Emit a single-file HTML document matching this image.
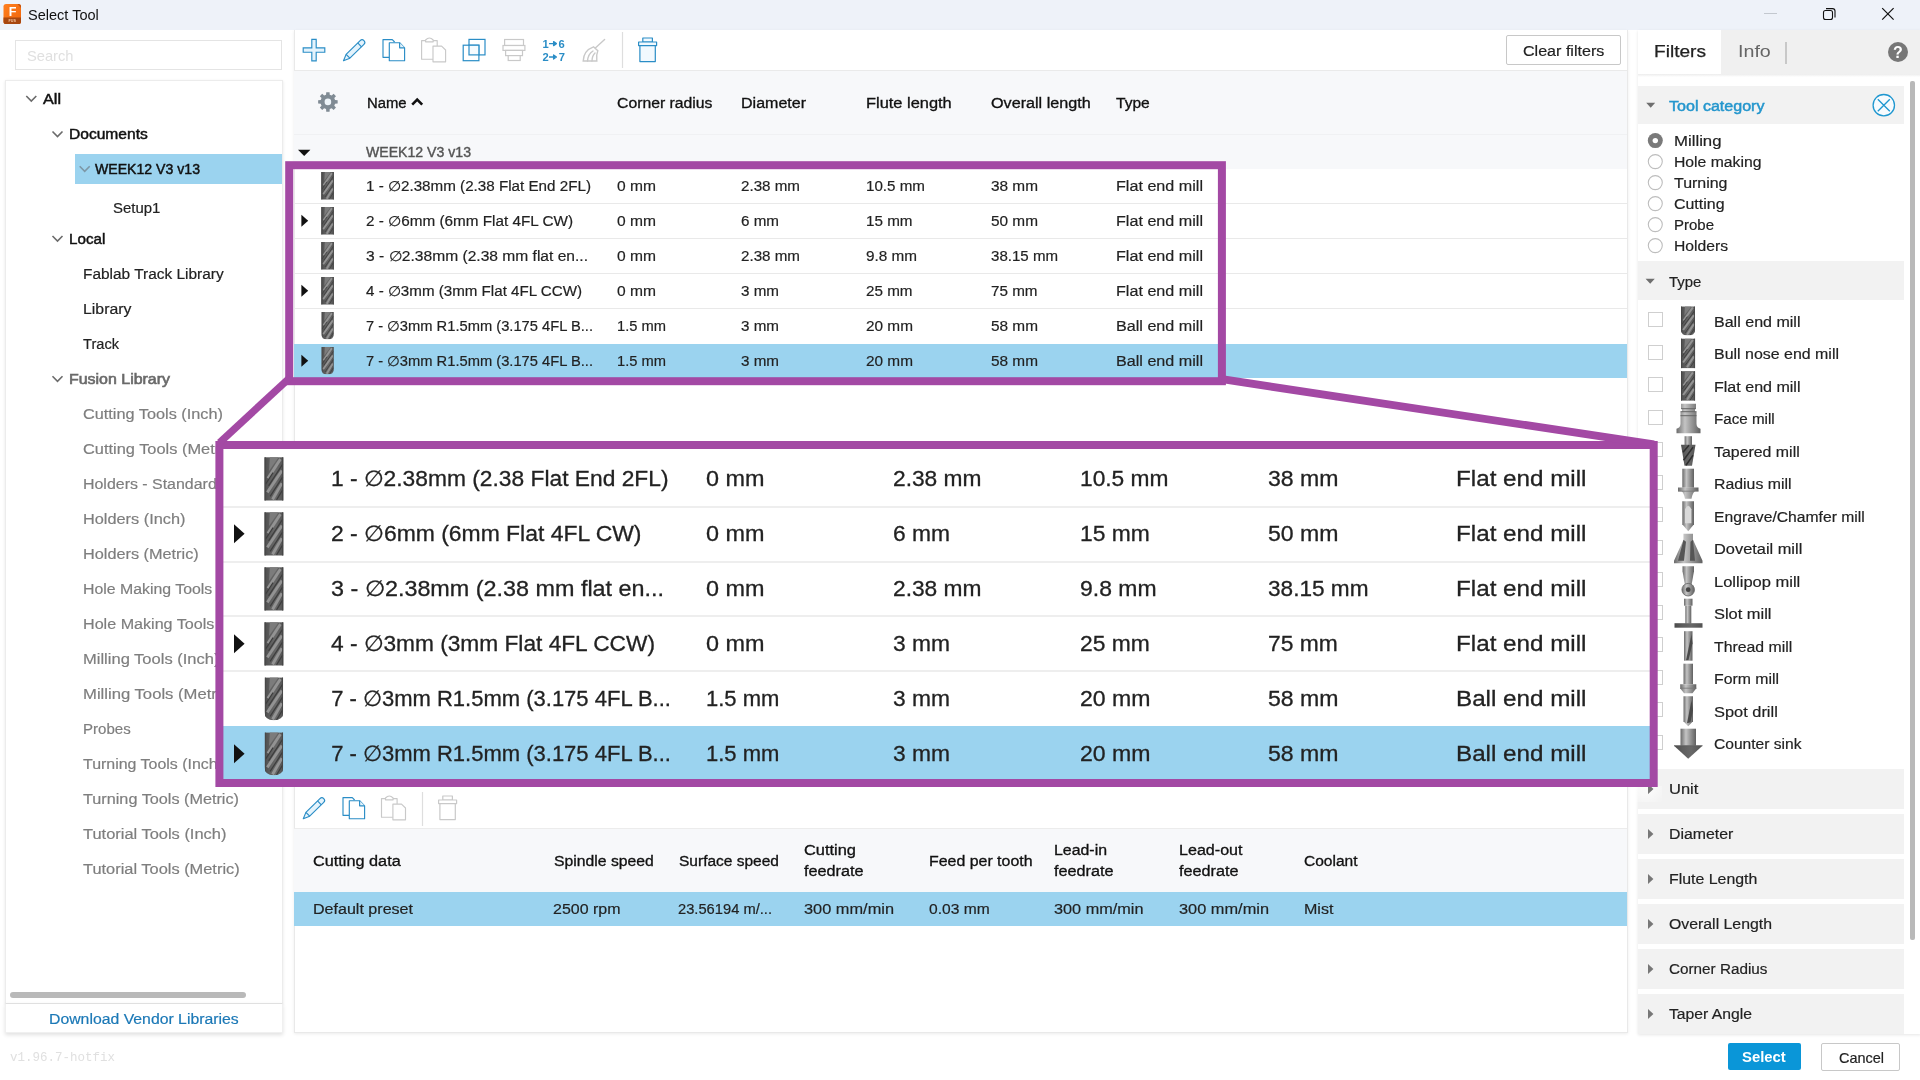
<!DOCTYPE html>
<html lang="en"><head><meta charset="utf-8"><title>Select Tool</title>
<style>
html,body{margin:0;padding:0;background:#fff;}
body{width:1920px;height:1080px;overflow:hidden;font-family:"Liberation Sans", sans-serif;}
#app{position:relative;width:1920px;height:1080px;overflow:hidden;background:#fff;will-change:transform;}
#app>div,#app>svg{position:absolute;box-sizing:border-box;}
.t{position:absolute;white-space:pre;transform-origin:0 50%;display:inline-block;}
</style></head><body>
<div id="app">
<div style="left:0px;top:0px;width:1920px;height:30px;background:#eef2f9;"></div>
<div style="left:15px;top:40px;width:267px;height:29.5px;background:#fff;border:1px solid #e4e4e4;"></div>
<div style="left:5px;top:79.5px;width:277.5px;height:924px;background:#fff;border:1px solid #ececec;box-shadow:0 1px 3px rgba(0,0,0,.10);"></div>
<div style="left:5px;top:1003px;width:277.5px;height:30px;background:#fff;border:1px solid #f0f0f0;border-top-color:#e0e0e0;box-shadow:0 2px 4px rgba(0,0,0,.12);"></div>
<div style="left:75px;top:154px;width:207px;height:30px;background:#9bd3ef;"></div>
<div style="left:10px;top:992.3px;width:235.7px;height:5.4px;background:#b9b9b9;border-radius:3px;"></div>
<div style="left:293.5px;top:30px;width:1334px;height:1003px;background:#fff;border:1px solid #e9e9e9;border-top:none;box-shadow:0 1px 3px rgba(0,0,0,.08);"></div>
<div style="left:294px;top:70px;width:1333px;height:64px;background:#f7f8fa;border-top:1px solid #eaeaea;"></div>
<div style="left:294px;top:134px;width:1333px;height:34.5px;background:#f7f8fa;border-top:1px solid #f0f1f3;"></div>
<div style="left:294px;top:203.0px;width:1333px;height:1px;background:#e9e9e9;"></div>
<div style="left:294px;top:238.0px;width:1333px;height:1px;background:#e9e9e9;"></div>
<div style="left:294px;top:273.0px;width:1333px;height:1px;background:#e9e9e9;"></div>
<div style="left:294px;top:308.0px;width:1333px;height:1px;background:#e9e9e9;"></div>
<div style="left:294px;top:343.7px;width:1333px;height:34.3px;background:#9bd3ef;"></div>
<div style="left:1506px;top:35px;width:115px;height:30px;background:#fff;border:1px solid #c8c8c8;border-radius:2px;"></div>
<div style="left:294px;top:828px;width:1333px;height:1px;background:#ececec;"></div>
<div style="left:294px;top:829px;width:1333px;height:63px;background:#f7f8fa;"></div>
<div style="left:294px;top:892px;width:1333px;height:34px;background:#9bd3ef;"></div>
<div style="left:1637.5px;top:30px;width:283px;height:1004px;background:#fff;box-shadow:0 1px 3px rgba(0,0,0,.10);"></div>
<div style="left:1721px;top:30px;width:199px;height:44px;background:#f0f0f0;"></div>
<div style="left:1637.5px;top:74px;width:283px;height:3px;background:linear-gradient(#ececec,#fff);"></div>
<div style="left:1785.2px;top:41.5px;width:1.6px;height:22.5px;background:#c8c8c8;"></div>
<div style="left:1637.5px;top:85.7px;width:266.3px;height:38.8px;background:#f2f2f2;"></div>
<div style="left:1637.5px;top:261.2px;width:266.3px;height:38.8px;background:#f2f2f2;"></div>
<div style="left:1637.5px;top:769px;width:266.3px;height:40px;background:#f2f2f2;"></div>
<div style="left:1637.5px;top:814px;width:266.3px;height:40px;background:#f2f2f2;"></div>
<div style="left:1637.5px;top:859px;width:266.3px;height:40px;background:#f2f2f2;"></div>
<div style="left:1637.5px;top:904px;width:266.3px;height:40px;background:#f2f2f2;"></div>
<div style="left:1637.5px;top:949px;width:266.3px;height:40px;background:#f2f2f2;"></div>
<div style="left:1637.5px;top:994px;width:266.3px;height:40px;background:#f2f2f2;"></div>
<div style="left:1909.7px;top:80.7px;width:5px;height:859px;background:#b9b9b9;border-radius:2px;"></div>
<div style="left:1648px;top:312.0px;width:15px;height:15px;background:#fff;border:1px solid #cfcfcf;"></div>
<div style="left:1648px;top:344.5px;width:15px;height:15px;background:#fff;border:1px solid #cfcfcf;"></div>
<div style="left:1648px;top:377.0px;width:15px;height:15px;background:#fff;border:1px solid #cfcfcf;"></div>
<div style="left:1648px;top:409.5px;width:15px;height:15px;background:#fff;border:1px solid #cfcfcf;"></div>
<div style="left:1648px;top:442.0px;width:15px;height:15px;background:#fff;border:1px solid #cfcfcf;"></div>
<div style="left:1648px;top:474.5px;width:15px;height:15px;background:#fff;border:1px solid #cfcfcf;"></div>
<div style="left:1648px;top:507.0px;width:15px;height:15px;background:#fff;border:1px solid #cfcfcf;"></div>
<div style="left:1648px;top:539.5px;width:15px;height:15px;background:#fff;border:1px solid #cfcfcf;"></div>
<div style="left:1648px;top:572.0px;width:15px;height:15px;background:#fff;border:1px solid #cfcfcf;"></div>
<div style="left:1648px;top:604.5px;width:15px;height:15px;background:#fff;border:1px solid #cfcfcf;"></div>
<div style="left:1648px;top:637.0px;width:15px;height:15px;background:#fff;border:1px solid #cfcfcf;"></div>
<div style="left:1648px;top:669.5px;width:15px;height:15px;background:#fff;border:1px solid #cfcfcf;"></div>
<div style="left:1648px;top:702.0px;width:15px;height:15px;background:#fff;border:1px solid #cfcfcf;"></div>
<div style="left:1648px;top:734.5px;width:15px;height:15px;background:#fff;border:1px solid #cfcfcf;"></div>
<div style="left:1728px;top:1043px;width:73px;height:26.7px;background:#0a96d8;border-radius:2px;"></div>
<div style="left:1821px;top:1043px;width:79px;height:28px;background:#fff;border:1px solid #c8c8c8;border-radius:2px;"></div>
<svg width="1920" height="1080" viewBox="0 0 1920 1080" style="left:0;top:0;pointer-events:none"><defs>
<linearGradient id="cyl" x1="0" x2="1" y1="0" y2="0"><stop offset="0" stop-color="#4c4c4c"/><stop offset=".3" stop-color="#5e5e5e"/><stop offset=".6" stop-color="#686868"/><stop offset="1" stop-color="#535353"/></linearGradient>
<linearGradient id="cyl2" x1="0" x2="1" y1="0" y2="0"><stop offset="0" stop-color="#6a6a6a"/><stop offset=".35" stop-color="#c4c4c4"/><stop offset=".6" stop-color="#9c9c9c"/><stop offset="1" stop-color="#606060"/></linearGradient>
<g id="flutes"><path d="M4 0 H10.5 L3.4 9.5 Z" fill="#7c7c7c"/><g stroke="#939393" stroke-width="2.1" fill="none"><path d="M11.9 1.2 L2.5 14.6 M13 9.2 L2.1 24.3 M13 18 L6 29.2"/></g><g stroke="#3d3d3d" stroke-width=".9" fill="none"><path d="M13.6 4.8 L3 19.8 M13.6 13.6 L4.2 27.2 M6.4 10.6 L0.8 18.6 M13.6 22.6 L9 29.6"/></g><path d="M0.5 0 V30 M13.6 0 V30" stroke="#474747" stroke-width=".9"/></g>
<clipPath id="ballclip"><path d="M0 0 H14 V24 Q14 30 7 30 Q0 30 0 24 Z"/></clipPath>
<g id="flat"><rect x="0" y="0" width="14" height="30" fill="url(#cyl)"/><use href="#flutes"/></g>
<g id="ball" clip-path="url(#ballclip)"><rect x="0" y="0" width="14" height="30" fill="url(#cyl)"/><use href="#flutes"/></g>
</defs><defs><linearGradient id="fz" x1="0" y1="0" x2="1" y2="1"><stop offset="0" stop-color="#ff7f1f"/><stop offset="1" stop-color="#ee640a"/></linearGradient></defs><rect x="3.5" y="4" width="17.5" height="20" rx="2.6" fill="url(#fz)"/><path d="M3.5 17.6 H21 V21.4 Q21 24 18.4 24 H6.1 Q3.5 24 3.5 21.4 Z" fill="#a8470f"/><path d="M17.5 4 H18.4 Q21 4 21 6.6 V8 Z" fill="#c4530f"/><text x="8.7" y="16" font-family="Liberation Sans, sans-serif" font-weight="700" font-size="12.6" fill="#fff">F</text><text x="8.6" y="22.4" font-family="Liberation Sans, sans-serif" font-weight="700" font-size="3.6" fill="#f6c9a6" textLength="7.4" lengthAdjust="spacingAndGlyphs">FUS</text><path d="M1764 13.5 H1777" stroke="#c3c8cf" stroke-width="1"/><rect x="1823.5" y="10.5" width="9" height="9" rx="2" fill="none" stroke="#111" stroke-width="1.1"/><path d="M1826 8.6 H1832.5 Q1835 8.6 1835 11 V17.5" fill="none" stroke="#111" stroke-width="1.1"/><path d="M1882.2 8.2 L1893.6 19.6 M1893.6 8.2 L1882.2 19.6" stroke="#111" stroke-width="1.2"/><path d="M26.3 96 l5 5 l5 -5" fill="none" stroke="#6b6b6b" stroke-width="1.6"/><path d="M52.5 131.5 l5 5 l5 -5" fill="none" stroke="#6b6b6b" stroke-width="1.6"/><path d="M79.7 166.3 l5 5 l5 -5" fill="none" stroke="#7d97a6" stroke-width="1.6"/><path d="M52.5 236 l5 5 l5 -5" fill="none" stroke="#6b6b6b" stroke-width="1.6"/><path d="M52.5 376.3 l5 5 l5 -5" fill="none" stroke="#6b6b6b" stroke-width="1.6"/><path d="M311.8 39.3 h4.4 v8.5 h8.6 v4.4 h-8.6 v8.6 h-4.4 v-8.6 h-8.6 v-4.4 h8.6 z" fill="#e4f3fc" stroke="#2a8dc6" stroke-width="1.15"/><g transform="translate(343.5,60.7) rotate(-44.5)" fill="#e4f3fc" stroke="#2a8dc6" stroke-width="1.15" stroke-linejoin="round"><path d="M0 0 L6.3 -2.7 H26 A2.7 2.7 0 0 1 26 2.7 H6.3 Z"/><path d="M6.3 -2.7 V2.7 M22.6 -2.7 V2.7" fill="none"/></g><g transform="translate(0,0)" fill="#fff" stroke="#2a8dc6" stroke-width="1.15" stroke-linejoin="round"><path d="M389.3 57.3 H383 V39.6 H392.3 L394.6 42" fill="none"/><path d="M389.3 42.7 H399.6 L404.6 47.8 V60.7 H389.3 Z"/><path d="M399.6 42.7 V47.8 H404.6" fill="#e4f3fc"/></g><g transform="translate(0,0)" fill="#fff" stroke="#c9c9c9" stroke-width="1.15" stroke-linejoin="round"><path d="M433 59.2 H421.6 V40.6 H437.2 V46" fill="none"/><path d="M425.6 41.8 V40 Q429.4 36 433.2 40 V41.8 Z"/><path d="M433 46.1 H441.6 L445.6 50 V61.8 H433 Z"/></g><g fill="#fff" stroke="#2a8dc6" stroke-width="1.2"><rect x="469" y="39.4" width="16" height="15.5"/><rect x="463.2" y="45.2" width="15.7" height="15.5"/><rect x="469" y="45.2" width="9.9" height="9.7" fill="#f6fbfe"/></g><g fill="#fff" stroke="#c9c9c9" stroke-width="1.2"><rect x="504.6" y="39.5" width="18.9" height="6"/><rect x="503" y="45.5" width="21.9" height="4.9"/><rect x="505.6" y="50.4" width="16.9" height="5.2"/><rect x="508.2" y="55.6" width="12" height="4.9"/></g><g font-family="Liberation Sans, sans-serif" font-weight="700" font-size="11.2" fill="#2a8dc6"><text x="542.4" y="47.6">1</text><text x="558.6" y="47.6">6</text><text x="542.4" y="61">2</text><text x="558.8" y="61">7</text><path d="M549 43.6 H555 M553.6 41.6 L556.4 43.6 L553.6 45.6 Z M549 57 H555 M553.6 55 L556.4 57 L553.6 59 Z" stroke="#2a8dc6" stroke-width="1.3" stroke-linejoin="round"/></g><g fill="none" stroke="#c9c9c9" stroke-width="1.4" stroke-linecap="round"><path d="M604.6 39.4 L595.6 47.8"/><path d="M583.2 61 Q583.5 50.5 593.5 46.8 L597.8 50.8 Q596 55 596.8 61 Z" fill="#fff"/><path d="M587.5 61 Q588 54 593 51 M592 61 Q592 56 595 53"/></g><path d="M622.5 32 V68 M422.5 792 V826" stroke="#dedede" stroke-width="1.2"/><g transform="translate(0,0)" fill="#f2f9fe" stroke="#2a8dc6" stroke-width="1.2" stroke-linejoin="round"><rect x="642.8" y="38" width="9.6" height="4"/><rect x="638.6" y="42" width="18" height="3.6"/><rect x="639.9" y="45.6" width="15.4" height="16"/></g><g transform="translate(303.3,818.7) rotate(-44.5)" fill="#e4f3fc" stroke="#2a8dc6" stroke-width="1.15" stroke-linejoin="round"><path d="M0 0 L6.3 -2.7 H26 A2.7 2.7 0 0 1 26 2.7 H6.3 Z"/><path d="M6.3 -2.7 V2.7 M22.6 -2.7 V2.7" fill="none"/></g><g transform="translate(-40,758)" fill="#fff" stroke="#2a8dc6" stroke-width="1.15" stroke-linejoin="round"><path d="M389.3 57.3 H383 V39.6 H392.3 L394.6 42" fill="none"/><path d="M389.3 42.7 H399.6 L404.6 47.8 V60.7 H389.3 Z"/><path d="M399.6 42.7 V47.8 H404.6" fill="#e4f3fc"/></g><g transform="translate(-40.1,758)" fill="#fff" stroke="#c9c9c9" stroke-width="1.15" stroke-linejoin="round"><path d="M433 59.2 H421.6 V40.6 H437.2 V46" fill="none"/><path d="M425.6 41.8 V40 Q429.4 36 433.2 40 V41.8 Z"/><path d="M433 46.1 H441.6 L445.6 50 V61.8 H433 Z"/></g><g transform="translate(-200,758)" fill="#fff" stroke="#c9c9c9" stroke-width="1.2" stroke-linejoin="round"><rect x="642.8" y="38" width="9.6" height="4"/><rect x="638.6" y="42" width="18" height="3.6"/><rect x="639.9" y="45.6" width="15.4" height="16"/></g><path d="M326.23 92.14 L329.57 92.14 L329.73 94.73 L331.68 95.54 L333.62 93.82 L335.98 96.18 L334.26 98.12 L335.07 100.07 L337.66 100.23 L337.66 103.57 L335.07 103.73 L334.26 105.68 L335.98 107.62 L333.62 109.98 L331.68 108.26 L329.73 109.07 L329.57 111.66 L326.23 111.66 L326.07 109.07 L324.12 108.26 L322.18 109.98 L319.82 107.62 L321.54 105.68 L320.73 103.73 L318.14 103.57 L318.14 100.23 L320.73 100.07 L321.54 98.12 L319.82 96.18 L322.18 93.82 L324.12 95.54 L326.07 94.73 Z" fill="#808b94"/><circle cx="327.9" cy="101.9" r="3.3" fill="#eef4f9"/><path d="M412.2 104.6 L417.2 99.6 L422.2 104.6" fill="none" stroke="#111" stroke-width="2.6"/><path d="M298 149.7 H310.4 L304.2 155.9 Z" fill="#111"/><path d="M301.4 214.75 L308.2 220.75 L301.4 226.75 Z" fill="#111"/><path d="M301.4 284.75 L308.2 290.75 L301.4 296.75 Z" fill="#111"/><path d="M301.4 354.75 L308.2 360.75 L301.4 366.75 Z" fill="#111"/><use href="#flat" transform="translate(321.3,172) scale(0.893,0.917)"/><use href="#flat" transform="translate(321.3,207) scale(0.893,0.917)"/><use href="#flat" transform="translate(321.3,242) scale(0.893,0.917)"/><use href="#flat" transform="translate(321.3,277) scale(0.893,0.917)"/><use href="#ball" transform="translate(321.3,312) scale(0.893,0.917)"/><use href="#ball" transform="translate(321.3,347) scale(0.893,0.917)"/><circle cx="1898" cy="52" r="10" fill="#777"/><text x="1898" y="58" text-anchor="middle" font-family="Liberation Sans, sans-serif" font-weight="700" font-size="16" fill="#fff">?</text><circle cx="1883.8" cy="105.2" r="10.7" fill="#f7fbfe" stroke="#1f97d0" stroke-width="1.3"/><path d="M1877.8 99.2 L1889.8 111.2 M1889.8 99.2 L1877.8 111.2" stroke="#1f97d0" stroke-width="1.3"/><path d="M1646.2 102.8 H1655.2 L1650.7 107.8 Z M1645.6 278.8 H1654.8 L1650.2 283.8 Z" fill="#6f6f6f"/><path d="M1648 784 L1653.4 789 L1648 794 Z" fill="#777"/><path d="M1648 829 L1653.4 834 L1648 839 Z" fill="#777"/><path d="M1648 874 L1653.4 879 L1648 884 Z" fill="#777"/><path d="M1648 919 L1653.4 924 L1648 929 Z" fill="#777"/><path d="M1648 964 L1653.4 969 L1648 974 Z" fill="#777"/><path d="M1648 1009 L1653.4 1014 L1648 1019 Z" fill="#777"/><circle cx="1655.3" cy="140.6" r="7.5" fill="#7a7a7a"/><circle cx="1655.3" cy="140.6" r="2.7" fill="#fff"/><circle cx="1655.3" cy="161.6" r="7" fill="#fff" stroke="#bdbdbd" stroke-width="1.1"/><circle cx="1655.3" cy="182.6" r="7" fill="#fff" stroke="#bdbdbd" stroke-width="1.1"/><circle cx="1655.3" cy="203.6" r="7" fill="#fff" stroke="#bdbdbd" stroke-width="1.1"/><circle cx="1655.3" cy="224.6" r="7" fill="#fff" stroke="#bdbdbd" stroke-width="1.1"/><circle cx="1655.3" cy="245.6" r="7" fill="#fff" stroke="#bdbdbd" stroke-width="1.1"/><use href="#ball" transform="translate(1681,306.2) scale(1,0.98)"/><use href="#flat" transform="translate(1681,338.7) scale(1,0.98)"/><use href="#flat" transform="translate(1681,371.2) scale(1,0.98)"/><g transform="translate(1681,403.7)"><path d="M0 0 H15 V5 H14 V8 H15.5 V20 Q15.5 24 19.5 25 V29.5 H-4.5 V25 Q-0.5 24 -0.5 20 V8 H1 V5 H0 Z" fill="url(#cyl2)"/><path d="M0 5 H15 M-0.5 8 H15.5 M-0.5 12 H15.5" stroke="#666" stroke-width="1"/></g><g transform="translate(1681,436.2)"><rect x="3.6" y="0" width="7.4" height="9" fill="url(#cyl2)"/><path d="M0 8.5 H14.5 L11 29.5 H3.5 Z" fill="url(#cyl)"/><path d="M2 16 L8 9 M2.5 24 L12 11 M5 29 L12 19" stroke="#2f2f2f" stroke-width="1.5"/></g><g transform="translate(1681,468.7)"><rect x="1.3" y="0" width="11.7" height="19" fill="url(#cyl2)"/><path d="M-3 18.8 H17.5 V22.5 H14 Q11.5 24 10.5 30 H4 Q3 24 0.5 22.5 H-3 Z" fill="url(#cyl2)"/><path d="M-3 22.5 H17.5" stroke="#777" stroke-width=".8"/></g><g transform="translate(1681,501.2)"><path d="M1.3 0 H13 V23 L7.2 30 L1.3 23 Z" fill="url(#cyl2)"/><path d="M4 8 Q7.2 1 10.4 8 V22 H4 Z" fill="#d9d9d9"/></g><g transform="translate(1681,533.7)"><path d="M2.5 0 H12 V6 L21.5 27 V29.5 H-7 V27 L2.5 6 Z" fill="url(#cyl2)"/><path d="M2.5 6 L-3 27 H3 L5 8 Z M12 6 L14 27 H9 L9.5 8 Z" fill="#555"/></g><g transform="translate(1681,566.2)"><path d="M1.5 0 H13 V5 L10.5 19 H4 L1.5 5 Z" fill="url(#cyl2)"/><circle cx="7.2" cy="23.5" r="6.3" fill="url(#cyl2)" stroke="#666" stroke-width=".8"/><circle cx="7.2" cy="23.5" r="2.4" fill="#444"/></g><g transform="translate(1681,598.7)"><rect x="3" y="0" width="8.5" height="7" fill="url(#cyl2)"/><rect x="4.3" y="7" width="6" height="18" fill="url(#cyl2)"/><rect x="-6.5" y="24.5" width="28" height="4.5" fill="url(#cyl)"/></g><g transform="translate(1681,631.2)"><rect x="3" y="0" width="8.5" height="29.5" fill="url(#cyl2)"/><path d="M5 29 L10.5 3 L11.5 12 L7.5 29 Z" fill="#4a4a4a"/></g><g transform="translate(1681,663.7)"><rect x="2.5" y="0" width="9.5" height="20.5" fill="url(#cyl2)"/><path d="M-0.8 20.5 H15.3 V24.5 L11.5 29.5 H3 L-0.8 24.5 Z" fill="url(#cyl2)"/><path d="M-0.8 24.5 H15.3" stroke="#777" stroke-width=".8"/></g><g transform="translate(1681,696.2)"><path d="M2.5 0 H12 V25 L7.2 30 L2.5 25 Z" fill="url(#cyl2)"/><path d="M6 27 L10.5 4 L12 14 L9.5 26 Z" fill="#4a4a4a"/></g><g transform="translate(1681,728.7)"><rect x="-0.5" y="0" width="15.5" height="17" fill="url(#cyl2)"/><path d="M-7 17 H21.5 L7.2 30 Z" fill="url(#cyl)"/><path d="M-7 17 H21.5" stroke="#555" stroke-width=".8"/></g></svg>
<span class="t" style="left:28.1px;top:4.80px;font-size:15px;line-height:20px;color:#111;transform:scaleX(0.9684);">Select Tool</span>
<span class="t" style="left:27px;top:45.60px;font-size:15px;line-height:20px;color:#e0e0e0;transform:scaleX(0.9783);">Search</span>
<span class="t" style="left:49px;top:1009.45px;font-size:14px;line-height:20px;color:#1b78b6;-webkit-text-stroke:0.18px #1b78b6;transform:scaleX(1.1284);">Download Vendor Libraries</span>
<span class="t" style="left:10.3px;top:1047.50px;font-size:13px;line-height:20px;color:#e0e0e0;font-family:'Liberation Mono', monospace;transform:scaleX(0.9614);">v1.96.7-hotfix</span>
<span class="t" style="left:43px;top:88.65px;font-size:14px;line-height:20px;color:#111;-webkit-text-stroke:0.45px #111;transform:scaleX(1.1566);">All</span>
<span class="t" style="left:69.2px;top:124.15px;font-size:14px;line-height:20px;color:#111;-webkit-text-stroke:0.45px #111;transform:scaleX(1.1128);">Documents</span>
<span class="t" style="left:95.3px;top:159.15px;font-size:14px;line-height:20px;color:#111;-webkit-text-stroke:0.45px #111;transform:scaleX(1.0069);">WEEK12 V3 v13</span>
<span class="t" style="left:113px;top:197.85px;font-size:14px;line-height:20px;color:#222;-webkit-text-stroke:0.18px #222;transform:scaleX(1.0659);">Setup1</span>
<span class="t" style="left:69px;top:228.65px;font-size:14px;line-height:20px;color:#111;-webkit-text-stroke:0.45px #111;transform:scaleX(1.0846);">Local</span>
<span class="t" style="left:83.3px;top:263.65px;font-size:14px;line-height:20px;color:#222;-webkit-text-stroke:0.18px #222;transform:scaleX(1.1026);">Fablab Track Library</span>
<span class="t" style="left:83.3px;top:298.65px;font-size:14px;line-height:20px;color:#222;-webkit-text-stroke:0.18px #222;transform:scaleX(1.1309);">Library</span>
<span class="t" style="left:83.3px;top:333.65px;font-size:14px;line-height:20px;color:#222;-webkit-text-stroke:0.18px #222;transform:scaleX(1.0440);">Track</span>
<span class="t" style="left:69px;top:368.95px;font-size:14px;line-height:20px;color:#6a6a6a;-webkit-text-stroke:0.6px #6a6a6a;transform:scaleX(1.1386);">Fusion Library</span>
<span class="t" style="left:83.3px;top:404.45px;font-size:14px;line-height:20px;color:#7e7e7e;-webkit-text-stroke:0.18px #7e7e7e;transform:scaleX(1.1632);">Cutting Tools (Inch)</span>
<span class="t" style="left:83.3px;top:439.45px;font-size:14px;line-height:20px;color:#7e7e7e;-webkit-text-stroke:0.18px #7e7e7e;transform:scaleX(1.1703);">Cutting Tools (Metric)</span>
<span class="t" style="left:83.3px;top:474.45px;font-size:14px;line-height:20px;color:#7e7e7e;-webkit-text-stroke:0.18px #7e7e7e;transform:scaleX(1.1382);">Holders - Standard Taper Blanks</span>
<span class="t" style="left:83.3px;top:509.45px;font-size:14px;line-height:20px;color:#7e7e7e;-webkit-text-stroke:0.18px #7e7e7e;transform:scaleX(1.1647);">Holders (Inch)</span>
<span class="t" style="left:83.3px;top:544.45px;font-size:14px;line-height:20px;color:#7e7e7e;-webkit-text-stroke:0.18px #7e7e7e;transform:scaleX(1.1619);">Holders (Metric)</span>
<span class="t" style="left:83.3px;top:579.45px;font-size:14px;line-height:20px;color:#7e7e7e;-webkit-text-stroke:0.18px #7e7e7e;transform:scaleX(1.1325);">Hole Making Tools (Inch)</span>
<span class="t" style="left:83.3px;top:614.45px;font-size:14px;line-height:20px;color:#7e7e7e;-webkit-text-stroke:0.18px #7e7e7e;transform:scaleX(1.1513);">Hole Making Tools (Metric)</span>
<span class="t" style="left:83.3px;top:649.45px;font-size:14px;line-height:20px;color:#7e7e7e;-webkit-text-stroke:0.18px #7e7e7e;transform:scaleX(1.1801);">Milling Tools (Inch)</span>
<span class="t" style="left:83.3px;top:684.45px;font-size:14px;line-height:20px;color:#7e7e7e;-webkit-text-stroke:0.18px #7e7e7e;transform:scaleX(1.1898);">Milling Tools (Metric)</span>
<span class="t" style="left:83.3px;top:719.45px;font-size:14px;line-height:20px;color:#7e7e7e;-webkit-text-stroke:0.18px #7e7e7e;transform:scaleX(1.0753);">Probes</span>
<span class="t" style="left:83.3px;top:754.45px;font-size:14px;line-height:20px;color:#7e7e7e;-webkit-text-stroke:0.18px #7e7e7e;transform:scaleX(1.1386);">Turning Tools (Inch)</span>
<span class="t" style="left:83.3px;top:789.45px;font-size:14px;line-height:20px;color:#7e7e7e;-webkit-text-stroke:0.18px #7e7e7e;transform:scaleX(1.1590);">Turning Tools (Metric)</span>
<span class="t" style="left:83.3px;top:824.45px;font-size:14px;line-height:20px;color:#7e7e7e;-webkit-text-stroke:0.18px #7e7e7e;transform:scaleX(1.1738);">Tutorial Tools (Inch)</span>
<span class="t" style="left:83.3px;top:859.45px;font-size:14px;line-height:20px;color:#7e7e7e;-webkit-text-stroke:0.18px #7e7e7e;transform:scaleX(1.1710);">Tutorial Tools (Metric)</span>
<span class="t" style="left:1523px;top:41.35px;font-size:14px;line-height:20px;color:#222;-webkit-text-stroke:0.18px #222;transform:scaleX(1.1484);">Clear filters</span>
<span class="t" style="left:366.8px;top:93.15px;font-size:14px;line-height:20px;color:#111;-webkit-text-stroke:0.33px #111;transform:scaleX(1.0600);">Name</span>
<span class="t" style="left:616.5px;top:93.15px;font-size:14px;line-height:20px;color:#111;-webkit-text-stroke:0.3px #111;transform:scaleX(1.1258);">Corner radius</span>
<span class="t" style="left:741.3px;top:93.15px;font-size:14px;line-height:20px;color:#111;-webkit-text-stroke:0.3px #111;transform:scaleX(1.1444);">Diameter</span>
<span class="t" style="left:866.3px;top:93.15px;font-size:14px;line-height:20px;color:#111;-webkit-text-stroke:0.3px #111;transform:scaleX(1.1712);">Flute length</span>
<span class="t" style="left:991.3px;top:93.15px;font-size:14px;line-height:20px;color:#111;-webkit-text-stroke:0.3px #111;transform:scaleX(1.1541);">Overall length</span>
<span class="t" style="left:1116.3px;top:93.15px;font-size:14px;line-height:20px;color:#111;-webkit-text-stroke:0.3px #111;transform:scaleX(1.1100);">Type</span>
<span class="t" style="left:366.3px;top:141.75px;font-size:14px;line-height:20px;color:#555;-webkit-text-stroke:0.4px #555;transform:scaleX(1.0069);">WEEK12 V3 v13</span>
<span class="t" style="left:366.3px;top:175.95px;font-size:14px;line-height:20px;color:#222;-webkit-text-stroke:0.18px #222;transform:scaleX(1.0853);">1 - ∅2.38mm (2.38 Flat End 2FL)</span>
<span class="t" style="left:616.5px;top:175.95px;font-size:14px;line-height:20px;color:#222;-webkit-text-stroke:0.18px #222;transform:scaleX(1.1143);">0 mm</span>
<span class="t" style="left:741.3px;top:175.95px;font-size:14px;line-height:20px;color:#222;-webkit-text-stroke:0.18px #222;transform:scaleX(1.0832);">2.38 mm</span>
<span class="t" style="left:866.3px;top:175.95px;font-size:14px;line-height:20px;color:#222;-webkit-text-stroke:0.18px #222;transform:scaleX(1.0832);">10.5 mm</span>
<span class="t" style="left:991.3px;top:175.95px;font-size:14px;line-height:20px;color:#222;-webkit-text-stroke:0.18px #222;transform:scaleX(1.0982);">38 mm</span>
<span class="t" style="left:1116.3px;top:175.95px;font-size:14px;line-height:20px;color:#222;-webkit-text-stroke:0.18px #222;transform:scaleX(1.1528);">Flat end mill</span>
<span class="t" style="left:366.3px;top:210.95px;font-size:14px;line-height:20px;color:#222;-webkit-text-stroke:0.18px #222;transform:scaleX(1.0917);">2 - ∅6mm (6mm Flat 4FL CW)</span>
<span class="t" style="left:616.5px;top:210.95px;font-size:14px;line-height:20px;color:#222;-webkit-text-stroke:0.18px #222;transform:scaleX(1.1143);">0 mm</span>
<span class="t" style="left:741.3px;top:210.95px;font-size:14px;line-height:20px;color:#222;-webkit-text-stroke:0.18px #222;transform:scaleX(1.0857);">6 mm</span>
<span class="t" style="left:866.3px;top:210.95px;font-size:14px;line-height:20px;color:#222;-webkit-text-stroke:0.18px #222;transform:scaleX(1.0865);">15 mm</span>
<span class="t" style="left:991.3px;top:210.95px;font-size:14px;line-height:20px;color:#222;-webkit-text-stroke:0.18px #222;transform:scaleX(1.0982);">50 mm</span>
<span class="t" style="left:1116.3px;top:210.95px;font-size:14px;line-height:20px;color:#222;-webkit-text-stroke:0.18px #222;transform:scaleX(1.1528);">Flat end mill</span>
<span class="t" style="left:366.3px;top:245.95px;font-size:14px;line-height:20px;color:#222;-webkit-text-stroke:0.18px #222;transform:scaleX(1.1127);">3 - ∅2.38mm (2.38 mm flat en...</span>
<span class="t" style="left:616.5px;top:245.95px;font-size:14px;line-height:20px;color:#222;-webkit-text-stroke:0.18px #222;transform:scaleX(1.1143);">0 mm</span>
<span class="t" style="left:741.3px;top:245.95px;font-size:14px;line-height:20px;color:#222;-webkit-text-stroke:0.18px #222;transform:scaleX(1.0832);">2.38 mm</span>
<span class="t" style="left:866.3px;top:245.95px;font-size:14px;line-height:20px;color:#222;-webkit-text-stroke:0.18px #222;transform:scaleX(1.0924);">9.8 mm</span>
<span class="t" style="left:991.3px;top:245.95px;font-size:14px;line-height:20px;color:#222;-webkit-text-stroke:0.18px #222;transform:scaleX(1.0763);">38.15 mm</span>
<span class="t" style="left:1116.3px;top:245.95px;font-size:14px;line-height:20px;color:#222;-webkit-text-stroke:0.18px #222;transform:scaleX(1.1528);">Flat end mill</span>
<span class="t" style="left:366.3px;top:280.95px;font-size:14px;line-height:20px;color:#222;-webkit-text-stroke:0.18px #222;transform:scaleX(1.0815);">4 - ∅3mm (3mm Flat 4FL CCW)</span>
<span class="t" style="left:616.5px;top:280.95px;font-size:14px;line-height:20px;color:#222;-webkit-text-stroke:0.18px #222;transform:scaleX(1.1143);">0 mm</span>
<span class="t" style="left:741.3px;top:280.95px;font-size:14px;line-height:20px;color:#222;-webkit-text-stroke:0.18px #222;transform:scaleX(1.0857);">3 mm</span>
<span class="t" style="left:866.3px;top:280.95px;font-size:14px;line-height:20px;color:#222;-webkit-text-stroke:0.18px #222;transform:scaleX(1.0865);">25 mm</span>
<span class="t" style="left:991.3px;top:280.95px;font-size:14px;line-height:20px;color:#222;-webkit-text-stroke:0.18px #222;transform:scaleX(1.0865);">75 mm</span>
<span class="t" style="left:1116.3px;top:280.95px;font-size:14px;line-height:20px;color:#222;-webkit-text-stroke:0.18px #222;transform:scaleX(1.1528);">Flat end mill</span>
<span class="t" style="left:366.3px;top:315.95px;font-size:14px;line-height:20px;color:#222;-webkit-text-stroke:0.18px #222;transform:scaleX(1.0504);">7 - ∅3mm R1.5mm (3.175 4FL B...</span>
<span class="t" style="left:616.5px;top:315.95px;font-size:14px;line-height:20px;color:#222;-webkit-text-stroke:0.18px #222;transform:scaleX(1.0495);">1.5 mm</span>
<span class="t" style="left:741.3px;top:315.95px;font-size:14px;line-height:20px;color:#222;-webkit-text-stroke:0.18px #222;transform:scaleX(1.0857);">3 mm</span>
<span class="t" style="left:866.3px;top:315.95px;font-size:14px;line-height:20px;color:#222;-webkit-text-stroke:0.18px #222;transform:scaleX(1.0982);">20 mm</span>
<span class="t" style="left:991.3px;top:315.95px;font-size:14px;line-height:20px;color:#222;-webkit-text-stroke:0.18px #222;transform:scaleX(1.0982);">58 mm</span>
<span class="t" style="left:1116.3px;top:315.95px;font-size:14px;line-height:20px;color:#222;-webkit-text-stroke:0.18px #222;transform:scaleX(1.1526);">Ball end mill</span>
<span class="t" style="left:366.3px;top:350.95px;font-size:14px;line-height:20px;color:#222;-webkit-text-stroke:0.18px #222;transform:scaleX(1.0504);">7 - ∅3mm R1.5mm (3.175 4FL B...</span>
<span class="t" style="left:616.5px;top:350.95px;font-size:14px;line-height:20px;color:#222;-webkit-text-stroke:0.18px #222;transform:scaleX(1.0495);">1.5 mm</span>
<span class="t" style="left:741.3px;top:350.95px;font-size:14px;line-height:20px;color:#222;-webkit-text-stroke:0.18px #222;transform:scaleX(1.0857);">3 mm</span>
<span class="t" style="left:866.3px;top:350.95px;font-size:14px;line-height:20px;color:#222;-webkit-text-stroke:0.18px #222;transform:scaleX(1.0982);">20 mm</span>
<span class="t" style="left:991.3px;top:350.95px;font-size:14px;line-height:20px;color:#222;-webkit-text-stroke:0.18px #222;transform:scaleX(1.0982);">58 mm</span>
<span class="t" style="left:1116.3px;top:350.95px;font-size:14px;line-height:20px;color:#222;-webkit-text-stroke:0.18px #222;transform:scaleX(1.1526);">Ball end mill</span>
<span class="t" style="left:313px;top:851.15px;font-size:14px;line-height:20px;color:#111;-webkit-text-stroke:0.3px #111;transform:scaleX(1.1616);">Cutting data</span>
<span class="t" style="left:553.7px;top:851.15px;font-size:14px;line-height:20px;color:#111;-webkit-text-stroke:0.3px #111;transform:scaleX(1.1245);">Spindle speed</span>
<span class="t" style="left:678.6px;top:851.15px;font-size:14px;line-height:20px;color:#111;-webkit-text-stroke:0.3px #111;transform:scaleX(1.1075);">Surface speed</span>
<span class="t" style="left:803.8px;top:840.35px;font-size:14px;line-height:20px;color:#111;-webkit-text-stroke:0.3px #111;transform:scaleX(1.1722);">Cutting</span>
<span class="t" style="left:803.8px;top:861.15px;font-size:14px;line-height:20px;color:#111;-webkit-text-stroke:0.3px #111;transform:scaleX(1.1582);">feedrate</span>
<span class="t" style="left:929px;top:851.15px;font-size:14px;line-height:20px;color:#111;-webkit-text-stroke:0.3px #111;transform:scaleX(1.1366);">Feed per tooth</span>
<span class="t" style="left:1054px;top:840.35px;font-size:14px;line-height:20px;color:#111;-webkit-text-stroke:0.3px #111;transform:scaleX(1.1348);">Lead-in</span>
<span class="t" style="left:1054px;top:861.15px;font-size:14px;line-height:20px;color:#111;-webkit-text-stroke:0.3px #111;transform:scaleX(1.1582);">feedrate</span>
<span class="t" style="left:1179.1px;top:840.35px;font-size:14px;line-height:20px;color:#111;-webkit-text-stroke:0.3px #111;transform:scaleX(1.1487);">Lead-out</span>
<span class="t" style="left:1179.1px;top:861.15px;font-size:14px;line-height:20px;color:#111;-webkit-text-stroke:0.3px #111;transform:scaleX(1.1582);">feedrate</span>
<span class="t" style="left:1303.9px;top:851.15px;font-size:14px;line-height:20px;color:#111;-webkit-text-stroke:0.3px #111;transform:scaleX(1.1105);">Coolant</span>
<span class="t" style="left:313px;top:898.95px;font-size:14px;line-height:20px;color:#222;-webkit-text-stroke:0.18px #222;transform:scaleX(1.1472);">Default preset</span>
<span class="t" style="left:553px;top:898.95px;font-size:14px;line-height:20px;color:#222;-webkit-text-stroke:0.18px #222;transform:scaleX(1.1410);">2500 rpm</span>
<span class="t" style="left:678.3px;top:898.95px;font-size:14px;line-height:20px;color:#222;-webkit-text-stroke:0.18px #222;transform:scaleX(1.0501);">23.56194 m/...</span>
<span class="t" style="left:803.5px;top:898.95px;font-size:14px;line-height:20px;color:#222;-webkit-text-stroke:0.18px #222;transform:scaleX(1.1684);">300 mm/min</span>
<span class="t" style="left:928.7px;top:898.95px;font-size:14px;line-height:20px;color:#222;-webkit-text-stroke:0.18px #222;transform:scaleX(1.1144);">0.03 mm</span>
<span class="t" style="left:1054px;top:898.95px;font-size:14px;line-height:20px;color:#222;-webkit-text-stroke:0.18px #222;transform:scaleX(1.1619);">300 mm/min</span>
<span class="t" style="left:1178.6px;top:898.95px;font-size:14px;line-height:20px;color:#222;-webkit-text-stroke:0.18px #222;transform:scaleX(1.1684);">300 mm/min</span>
<span class="t" style="left:1304px;top:898.95px;font-size:14px;line-height:20px;color:#222;-webkit-text-stroke:0.18px #222;transform:scaleX(1.1452);">Mist</span>
<span class="t" style="left:1654px;top:41.65px;font-size:16.6px;line-height:20px;color:#222;-webkit-text-stroke:0.25px #222;transform:scaleX(1.1512);">Filters</span>
<span class="t" style="left:1737.7px;top:41.65px;font-size:16.6px;line-height:20px;color:#666;transform:scaleX(1.1847);">Info</span>
<span class="t" style="left:1668.7px;top:95.85px;font-size:14px;line-height:20px;color:#2496cd;-webkit-text-stroke:0.45px #2496cd;transform:scaleX(1.1467);">Tool category</span>
<span class="t" style="left:1668.7px;top:272.15px;font-size:14px;line-height:20px;color:#222;-webkit-text-stroke:0.18px #222;transform:scaleX(1.0639);">Type</span>
<span class="t" style="left:1668.7px;top:778.95px;font-size:14px;line-height:20px;color:#222;-webkit-text-stroke:0.18px #222;transform:scaleX(1.1764);">Unit</span>
<span class="t" style="left:1668.7px;top:823.95px;font-size:14px;line-height:20px;color:#222;-webkit-text-stroke:0.18px #222;transform:scaleX(1.1321);">Diameter</span>
<span class="t" style="left:1668.7px;top:868.95px;font-size:14px;line-height:20px;color:#222;-webkit-text-stroke:0.18px #222;transform:scaleX(1.1343);">Flute Length</span>
<span class="t" style="left:1668.7px;top:913.95px;font-size:14px;line-height:20px;color:#222;-webkit-text-stroke:0.18px #222;transform:scaleX(1.1311);">Overall Length</span>
<span class="t" style="left:1668.7px;top:958.95px;font-size:14px;line-height:20px;color:#222;-webkit-text-stroke:0.18px #222;transform:scaleX(1.0912);">Corner Radius</span>
<span class="t" style="left:1668.7px;top:1003.95px;font-size:14px;line-height:20px;color:#222;-webkit-text-stroke:0.18px #222;transform:scaleX(1.1223);">Taper Angle</span>
<span class="t" style="left:1674.2px;top:130.95px;font-size:14px;line-height:20px;color:#222;-webkit-text-stroke:0.18px #222;transform:scaleX(1.1969);">Milling</span>
<span class="t" style="left:1674.2px;top:151.95px;font-size:14px;line-height:20px;color:#222;-webkit-text-stroke:0.18px #222;transform:scaleX(1.1243);">Hole making</span>
<span class="t" style="left:1674.2px;top:172.95px;font-size:14px;line-height:20px;color:#222;-webkit-text-stroke:0.18px #222;transform:scaleX(1.1394);">Turning</span>
<span class="t" style="left:1674.2px;top:193.95px;font-size:14px;line-height:20px;color:#222;-webkit-text-stroke:0.18px #222;transform:scaleX(1.1384);">Cutting</span>
<span class="t" style="left:1674.2px;top:214.95px;font-size:14px;line-height:20px;color:#222;-webkit-text-stroke:0.18px #222;transform:scaleX(1.0707);">Probe</span>
<span class="t" style="left:1674.2px;top:235.95px;font-size:14px;line-height:20px;color:#222;-webkit-text-stroke:0.18px #222;transform:scaleX(1.1192);">Holders</span>
<span class="t" style="left:1714.3px;top:311.95px;font-size:14px;line-height:20px;color:#222;-webkit-text-stroke:0.18px #222;transform:scaleX(1.1459);">Ball end mill</span>
<span class="t" style="left:1714.3px;top:344.45px;font-size:14px;line-height:20px;color:#222;-webkit-text-stroke:0.18px #222;transform:scaleX(1.1391);">Bull nose end mill</span>
<span class="t" style="left:1714.3px;top:376.95px;font-size:14px;line-height:20px;color:#222;-webkit-text-stroke:0.18px #222;transform:scaleX(1.1462);">Flat end mill</span>
<span class="t" style="left:1714.3px;top:409.45px;font-size:14px;line-height:20px;color:#222;-webkit-text-stroke:0.18px #222;transform:scaleX(1.0836);">Face mill</span>
<span class="t" style="left:1714.3px;top:441.95px;font-size:14px;line-height:20px;color:#222;-webkit-text-stroke:0.18px #222;transform:scaleX(1.1353);">Tapered mill</span>
<span class="t" style="left:1714.3px;top:474.45px;font-size:14px;line-height:20px;color:#222;-webkit-text-stroke:0.18px #222;transform:scaleX(1.1319);">Radius mill</span>
<span class="t" style="left:1714.3px;top:506.95px;font-size:14px;line-height:20px;color:#222;-webkit-text-stroke:0.18px #222;transform:scaleX(1.1203);">Engrave/Chamfer mill</span>
<span class="t" style="left:1714.3px;top:539.45px;font-size:14px;line-height:20px;color:#222;-webkit-text-stroke:0.18px #222;transform:scaleX(1.1700);">Dovetail mill</span>
<span class="t" style="left:1714.3px;top:571.95px;font-size:14px;line-height:20px;color:#222;-webkit-text-stroke:0.18px #222;transform:scaleX(1.1797);">Lollipop mill</span>
<span class="t" style="left:1714.3px;top:604.45px;font-size:14px;line-height:20px;color:#222;-webkit-text-stroke:0.18px #222;transform:scaleX(1.1731);">Slot mill</span>
<span class="t" style="left:1714.3px;top:636.95px;font-size:14px;line-height:20px;color:#222;-webkit-text-stroke:0.18px #222;transform:scaleX(1.1307);">Thread mill</span>
<span class="t" style="left:1714.3px;top:669.45px;font-size:14px;line-height:20px;color:#222;-webkit-text-stroke:0.18px #222;transform:scaleX(1.1295);">Form mill</span>
<span class="t" style="left:1714.3px;top:701.95px;font-size:14px;line-height:20px;color:#222;-webkit-text-stroke:0.18px #222;transform:scaleX(1.1713);">Spot drill</span>
<span class="t" style="left:1714.3px;top:734.45px;font-size:14px;line-height:20px;color:#222;-webkit-text-stroke:0.18px #222;transform:scaleX(1.1133);">Counter sink</span>
<span class="t" style="left:1742.2px;top:1046.58px;font-size:14.5px;line-height:20px;color:#fff;font-weight:700;transform:scaleX(1.0249);">Select</span>
<span class="t" style="left:1838.5px;top:1047.68px;font-size:14.5px;line-height:20px;color:#222;-webkit-text-stroke:0.18px #222;transform:scaleX(0.9969);">Cancel</span>
<div style="left:219.5px;top:445px;width:1434px;height:338px;background:#fff;"></div>
<div style="left:223px;top:505.75px;width:1427px;height:2px;background:#eeeeee;"></div>
<div style="left:223px;top:560.5px;width:1427px;height:2px;background:#eeeeee;"></div>
<div style="left:223px;top:615px;width:1427px;height:2px;background:#eeeeee;"></div>
<div style="left:223px;top:670px;width:1427px;height:2px;background:#eeeeee;"></div>
<div style="left:223px;top:726px;width:1427px;height:53px;background:#9bd3ef;"></div>
<div style="left:1630px;top:786px;width:32px;height:16px;background:radial-gradient(ellipse at 50% 0%,rgba(255,255,255,.7) 0%,rgba(255,255,255,.5) 45%,rgba(255,255,255,0) 100%);"></div>
<span class="t" style="left:331.2px;top:464.08px;font-size:22px;line-height:29px;color:#222;-webkit-text-stroke:0.3px #222;transform:scaleX(1.0356);">1 - ∅2.38mm (2.38 Flat End 2FL)</span>
<span class="t" style="left:706px;top:464.08px;font-size:22px;line-height:29px;color:#222;-webkit-text-stroke:0.3px #222;transform:scaleX(1.0636);">0 mm</span>
<span class="t" style="left:893px;top:464.08px;font-size:22px;line-height:29px;color:#222;-webkit-text-stroke:0.3px #222;transform:scaleX(1.0340);">2.38 mm</span>
<span class="t" style="left:1080.3px;top:464.08px;font-size:22px;line-height:29px;color:#222;-webkit-text-stroke:0.3px #222;transform:scaleX(1.0340);">10.5 mm</span>
<span class="t" style="left:1268px;top:464.08px;font-size:22px;line-height:29px;color:#222;-webkit-text-stroke:0.3px #222;transform:scaleX(1.0483);">38 mm</span>
<span class="t" style="left:1456px;top:464.08px;font-size:22px;line-height:29px;color:#222;-webkit-text-stroke:0.3px #222;transform:scaleX(1.1004);">Flat end mill</span>
<span class="t" style="left:331.2px;top:519.08px;font-size:22px;line-height:29px;color:#222;-webkit-text-stroke:0.3px #222;transform:scaleX(1.0416);">2 - ∅6mm (6mm Flat 4FL CW)</span>
<span class="t" style="left:706px;top:519.08px;font-size:22px;line-height:29px;color:#222;-webkit-text-stroke:0.3px #222;transform:scaleX(1.0636);">0 mm</span>
<span class="t" style="left:893px;top:519.08px;font-size:22px;line-height:29px;color:#222;-webkit-text-stroke:0.3px #222;transform:scaleX(1.0364);">6 mm</span>
<span class="t" style="left:1080.3px;top:519.08px;font-size:22px;line-height:29px;color:#222;-webkit-text-stroke:0.3px #222;transform:scaleX(1.0372);">15 mm</span>
<span class="t" style="left:1268px;top:519.08px;font-size:22px;line-height:29px;color:#222;-webkit-text-stroke:0.3px #222;transform:scaleX(1.0483);">50 mm</span>
<span class="t" style="left:1456px;top:519.08px;font-size:22px;line-height:29px;color:#222;-webkit-text-stroke:0.3px #222;transform:scaleX(1.1004);">Flat end mill</span>
<span class="t" style="left:331.2px;top:574.08px;font-size:22px;line-height:29px;color:#222;-webkit-text-stroke:0.3px #222;transform:scaleX(1.0616);">3 - ∅2.38mm (2.38 mm flat en...</span>
<span class="t" style="left:706px;top:574.08px;font-size:22px;line-height:29px;color:#222;-webkit-text-stroke:0.3px #222;transform:scaleX(1.0636);">0 mm</span>
<span class="t" style="left:893px;top:574.08px;font-size:22px;line-height:29px;color:#222;-webkit-text-stroke:0.3px #222;transform:scaleX(1.0340);">2.38 mm</span>
<span class="t" style="left:1080.3px;top:574.08px;font-size:22px;line-height:29px;color:#222;-webkit-text-stroke:0.3px #222;transform:scaleX(1.0428);">9.8 mm</span>
<span class="t" style="left:1268px;top:574.08px;font-size:22px;line-height:29px;color:#222;-webkit-text-stroke:0.3px #222;transform:scaleX(1.0273);">38.15 mm</span>
<span class="t" style="left:1456px;top:574.08px;font-size:22px;line-height:29px;color:#222;-webkit-text-stroke:0.3px #222;transform:scaleX(1.1004);">Flat end mill</span>
<span class="t" style="left:331.2px;top:629.08px;font-size:22px;line-height:29px;color:#222;-webkit-text-stroke:0.3px #222;transform:scaleX(1.0319);">4 - ∅3mm (3mm Flat 4FL CCW)</span>
<span class="t" style="left:706px;top:629.08px;font-size:22px;line-height:29px;color:#222;-webkit-text-stroke:0.3px #222;transform:scaleX(1.0636);">0 mm</span>
<span class="t" style="left:893px;top:629.08px;font-size:22px;line-height:29px;color:#222;-webkit-text-stroke:0.3px #222;transform:scaleX(1.0364);">3 mm</span>
<span class="t" style="left:1080.3px;top:629.08px;font-size:22px;line-height:29px;color:#222;-webkit-text-stroke:0.3px #222;transform:scaleX(1.0372);">25 mm</span>
<span class="t" style="left:1268px;top:629.08px;font-size:22px;line-height:29px;color:#222;-webkit-text-stroke:0.3px #222;transform:scaleX(1.0372);">75 mm</span>
<span class="t" style="left:1456px;top:629.08px;font-size:22px;line-height:29px;color:#222;-webkit-text-stroke:0.3px #222;transform:scaleX(1.1004);">Flat end mill</span>
<span class="t" style="left:331.2px;top:684.08px;font-size:22px;line-height:29px;color:#222;-webkit-text-stroke:0.3px #222;">7 - ∅3mm R1.5mm (3.175 4FL B...</span>
<span class="t" style="left:706px;top:684.08px;font-size:22px;line-height:29px;color:#222;-webkit-text-stroke:0.3px #222;">1.5 mm</span>
<span class="t" style="left:893px;top:684.08px;font-size:22px;line-height:29px;color:#222;-webkit-text-stroke:0.3px #222;transform:scaleX(1.0364);">3 mm</span>
<span class="t" style="left:1080.3px;top:684.08px;font-size:22px;line-height:29px;color:#222;-webkit-text-stroke:0.3px #222;transform:scaleX(1.0483);">20 mm</span>
<span class="t" style="left:1268px;top:684.08px;font-size:22px;line-height:29px;color:#222;-webkit-text-stroke:0.3px #222;transform:scaleX(1.0483);">58 mm</span>
<span class="t" style="left:1456px;top:684.08px;font-size:22px;line-height:29px;color:#222;-webkit-text-stroke:0.3px #222;transform:scaleX(1.1003);">Ball end mill</span>
<span class="t" style="left:331.2px;top:739.08px;font-size:22px;line-height:29px;color:#222;-webkit-text-stroke:0.3px #222;">7 - ∅3mm R1.5mm (3.175 4FL B...</span>
<span class="t" style="left:706px;top:739.08px;font-size:22px;line-height:29px;color:#222;-webkit-text-stroke:0.3px #222;">1.5 mm</span>
<span class="t" style="left:893px;top:739.08px;font-size:22px;line-height:29px;color:#222;-webkit-text-stroke:0.3px #222;transform:scaleX(1.0364);">3 mm</span>
<span class="t" style="left:1080.3px;top:739.08px;font-size:22px;line-height:29px;color:#222;-webkit-text-stroke:0.3px #222;transform:scaleX(1.0483);">20 mm</span>
<span class="t" style="left:1268px;top:739.08px;font-size:22px;line-height:29px;color:#222;-webkit-text-stroke:0.3px #222;transform:scaleX(1.0483);">58 mm</span>
<span class="t" style="left:1456px;top:739.08px;font-size:22px;line-height:29px;color:#222;-webkit-text-stroke:0.3px #222;transform:scaleX(1.1003);">Ball end mill</span>
<svg width="1920" height="1080" viewBox="0 0 1920 1080" style="left:0;top:0;pointer-events:none"><use href="#flat" transform="translate(264.5,457.3) scale(1.34,1.44)"/><use href="#flat" transform="translate(264.5,512.3) scale(1.34,1.44)"/><use href="#flat" transform="translate(264.5,567.3) scale(1.34,1.44)"/><use href="#flat" transform="translate(264.5,622.3) scale(1.34,1.44)"/><use href="#ball" transform="translate(264.5,677.3) scale(1.34,1.44)"/><use href="#ball" transform="translate(264.5,732.3) scale(1.34,1.44)"/><path d="M234 524.3 L244.6 533.8 L234 543.3 Z" fill="#111"/><path d="M234 634.3 L244.6 643.8 L234 653.3 Z" fill="#111"/><path d="M234 744.3 L244.6 753.8 L234 763.3 Z" fill="#111"/><path d="M1648 784 L1653.4 789 L1648 794 Z" fill="#777"/><g fill="none" stroke="#a349a4" stroke-width="8" stroke-linejoin="miter"><rect x="289.2" y="165.2" width="932.7" height="216"/><rect x="219.4" y="445" width="1434.3" height="338"/><path d="M290.5 377.1 L219.6 442.6" stroke-width="7.4"/><path d="M1222 379.2 L1654 444.4" stroke-width="7.8"/></g></svg>
</div>
</body></html>
